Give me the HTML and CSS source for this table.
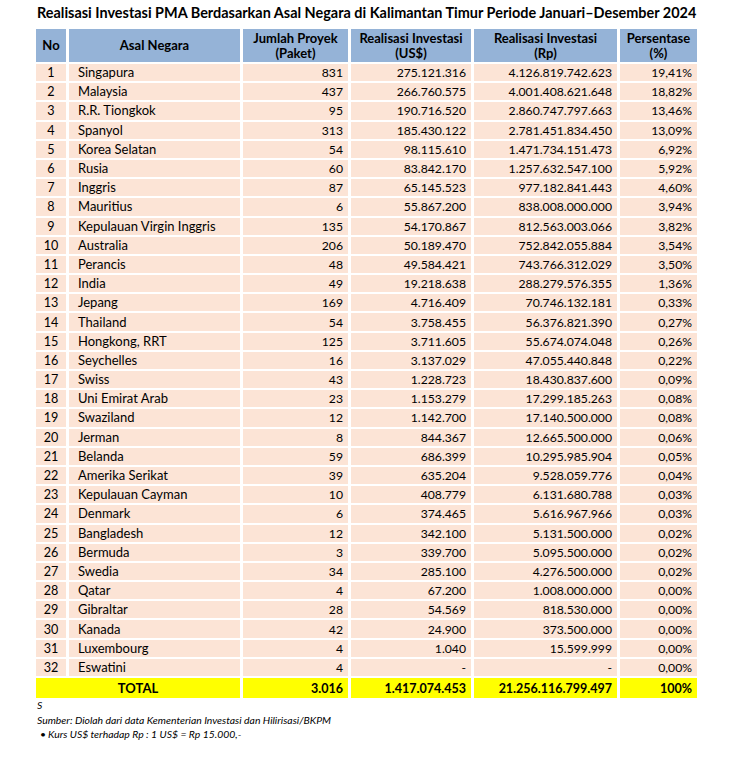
FILE: index.html
```html
<!DOCTYPE html>
<html lang="id">
<head>
<meta charset="utf-8">
<title>Realisasi Investasi PMA</title>
<link rel="stylesheet" href="styles.css">
</head>
<body>
<div class="page">
  <h1 class="title">Realisasi Investasi PMA Berdasarkan Asal Negara di Kalimantan Timur Periode Januari–Desember 2024</h1>
  <table class="data">
    <colgroup>
      <col class="c-no"><col class="c-name"><col class="c-proj"><col class="c-usd"><col class="c-rp"><col class="c-pct">
    </colgroup>
    <thead>
      <tr>
        <th>No</th>
        <th>Asal Negara</th>
        <th>Jumlah Proyek<br>(Paket)</th>
        <th>Realisasi Investasi<br>(US$)</th>
        <th>Realisasi Investasi<br>(Rp)</th>
        <th>Persentase<br>(%)</th>
      </tr>
    </thead>
    <tbody>
      <tr><td>1</td><td>Singapura</td><td>831</td><td>275.121.316</td><td>4.126.819.742.623</td><td>19,41%</td></tr>
      <tr><td>2</td><td>Malaysia</td><td>437</td><td>266.760.575</td><td>4.001.408.621.648</td><td>18,82%</td></tr>
      <tr><td>3</td><td>R.R. Tiongkok</td><td>95</td><td>190.716.520</td><td>2.860.747.797.663</td><td>13,46%</td></tr>
      <tr><td>4</td><td>Spanyol</td><td>313</td><td>185.430.122</td><td>2.781.451.834.450</td><td>13,09%</td></tr>
      <tr><td>5</td><td>Korea Selatan</td><td>54</td><td>98.115.610</td><td>1.471.734.151.473</td><td>6,92%</td></tr>
      <tr><td>6</td><td>Rusia</td><td>60</td><td>83.842.170</td><td>1.257.632.547.100</td><td>5,92%</td></tr>
      <tr><td>7</td><td>Inggris</td><td>87</td><td>65.145.523</td><td>977.182.841.443</td><td>4,60%</td></tr>
      <tr><td>8</td><td>Mauritius</td><td>6</td><td>55.867.200</td><td>838.008.000.000</td><td>3,94%</td></tr>
      <tr><td>9</td><td>Kepulauan Virgin Inggris</td><td>135</td><td>54.170.867</td><td>812.563.003.066</td><td>3,82%</td></tr>
      <tr><td>10</td><td>Australia</td><td>206</td><td>50.189.470</td><td>752.842.055.884</td><td>3,54%</td></tr>
      <tr><td>11</td><td>Perancis</td><td>48</td><td>49.584.421</td><td>743.766.312.029</td><td>3,50%</td></tr>
      <tr><td>12</td><td>India</td><td>49</td><td>19.218.638</td><td>288.279.576.355</td><td>1,36%</td></tr>
      <tr><td>13</td><td>Jepang</td><td>169</td><td>4.716.409</td><td>70.746.132.181</td><td>0,33%</td></tr>
      <tr><td>14</td><td>Thailand</td><td>54</td><td>3.758.455</td><td>56.376.821.390</td><td>0,27%</td></tr>
      <tr><td>15</td><td>Hongkong, RRT</td><td>125</td><td>3.711.605</td><td>55.674.074.048</td><td>0,26%</td></tr>
      <tr><td>16</td><td>Seychelles</td><td>16</td><td>3.137.029</td><td>47.055.440.848</td><td>0,22%</td></tr>
      <tr><td>17</td><td>Swiss</td><td>43</td><td>1.228.723</td><td>18.430.837.600</td><td>0,09%</td></tr>
      <tr><td>18</td><td>Uni Emirat Arab</td><td>23</td><td>1.153.279</td><td>17.299.185.263</td><td>0,08%</td></tr>
      <tr><td>19</td><td>Swaziland</td><td>12</td><td>1.142.700</td><td>17.140.500.000</td><td>0,08%</td></tr>
      <tr><td>20</td><td>Jerman</td><td>8</td><td>844.367</td><td>12.665.500.000</td><td>0,06%</td></tr>
      <tr><td>21</td><td>Belanda</td><td>59</td><td>686.399</td><td>10.295.985.904</td><td>0,05%</td></tr>
      <tr><td>22</td><td>Amerika Serikat</td><td>39</td><td>635.204</td><td>9.528.059.776</td><td>0,04%</td></tr>
      <tr><td>23</td><td>Kepulauan Cayman</td><td>10</td><td>408.779</td><td>6.131.680.788</td><td>0,03%</td></tr>
      <tr><td>24</td><td>Denmark</td><td>6</td><td>374.465</td><td>5.616.967.966</td><td>0,03%</td></tr>
      <tr><td>25</td><td>Bangladesh</td><td>12</td><td>342.100</td><td>5.131.500.000</td><td>0,02%</td></tr>
      <tr><td>26</td><td>Bermuda</td><td>3</td><td>339.700</td><td>5.095.500.000</td><td>0,02%</td></tr>
      <tr><td>27</td><td>Swedia</td><td>34</td><td>285.100</td><td>4.276.500.000</td><td>0,02%</td></tr>
      <tr><td>28</td><td>Qatar</td><td>4</td><td>67.200</td><td>1.008.000.000</td><td>0,00%</td></tr>
      <tr><td>29</td><td>Gibraltar</td><td>28</td><td>54.569</td><td>818.530.000</td><td>0,00%</td></tr>
      <tr><td>30</td><td>Kanada</td><td>42</td><td>24.900</td><td>373.500.000</td><td>0,00%</td></tr>
      <tr><td>31</td><td>Luxembourg</td><td>4</td><td>1.040</td><td>15.599.999</td><td>0,00%</td></tr>
      <tr><td>32</td><td>Eswatini</td><td>4</td><td>-</td><td>-</td><td>0,00%</td></tr>
    </tbody>
    <tfoot>
      <tr><td colspan="2">TOTAL</td><td>3.016</td><td>1.417.074.453</td><td>21.256.116.799.497</td><td>100%</td></tr>
    </tfoot>
  </table>
  <div class="notes">
    <p class="note">S</p>
    <p class="note">Sumber: Diolah dari data Kementerian Investasi dan Hilirisasi/BKPM</p>
    <p class="note bullet"><span class="dot">•</span>Kurs US$ terhadap Rp : 1 US$ = Rp 15.000,-</p>
  </div>
</div>
</body>
</html>
```

FILE: styles.css
```css
html, body {
  margin: 0;
  padding: 0;
  background: #ffffff;
}

.page {
  padding: 4px 0 0 33px;
  font-family: Lato, "Open Sans", sans-serif;
  color: #000;
}

.title {
  margin: 0 0 0 4px;
  font-size: 14.45px;
  font-weight: 700;
  line-height: 18px;
  white-space: nowrap;
}

.data {
  border-collapse: separate;
  border-spacing: 3px 2px;
  font-size: 12.2px;
  margin-top: 5px;
  table-layout: fixed;
  width: 667px;
}

.c-no { width: 30px; }
.c-name { width: 171px; }
.c-proj { width: 105px; }
.c-usd { width: 120px; }
.c-rp { width: 143px; }
.c-pct { width: 77px; }

.data th {
  background: #95b3d7;
  font-weight: 700;
  font-size: 13px;
  height: 33px;
  padding: 0;
  line-height: 15px;
  text-align: center;
  vertical-align: middle;
}

.data td {
  background: #fce4d6;
  height: 17.2px;
  padding: 0 5px 0 5px;
  line-height: 17px;
  text-align: right;
  white-space: nowrap;
}

.data tbody td:first-child {
  text-align: center;
  padding: 0;
  font-size: 12.6px;
}

.data tbody td:nth-child(2) {
  text-align: left;
  padding-left: 9px;
  font-size: 13px;
}

.data tfoot td {
  background: #ffff00;
  font-weight: 700;
  height: 20px;
  font-size: 12.5px;
}

.data tfoot td:first-child {
  text-align: center;
  font-size: 13px;
}

.notes {
  margin-top: -2px;
  padding-left: 4px;
  font-style: italic;
  font-size: 10.4px;
}

.note {
  margin: 0;
  line-height: 14.5px;
}

.bullet {
  padding-left: 3px;
}

.dot {
  font-style: normal;
  display: inline-block;
  width: 8px;
}
```
